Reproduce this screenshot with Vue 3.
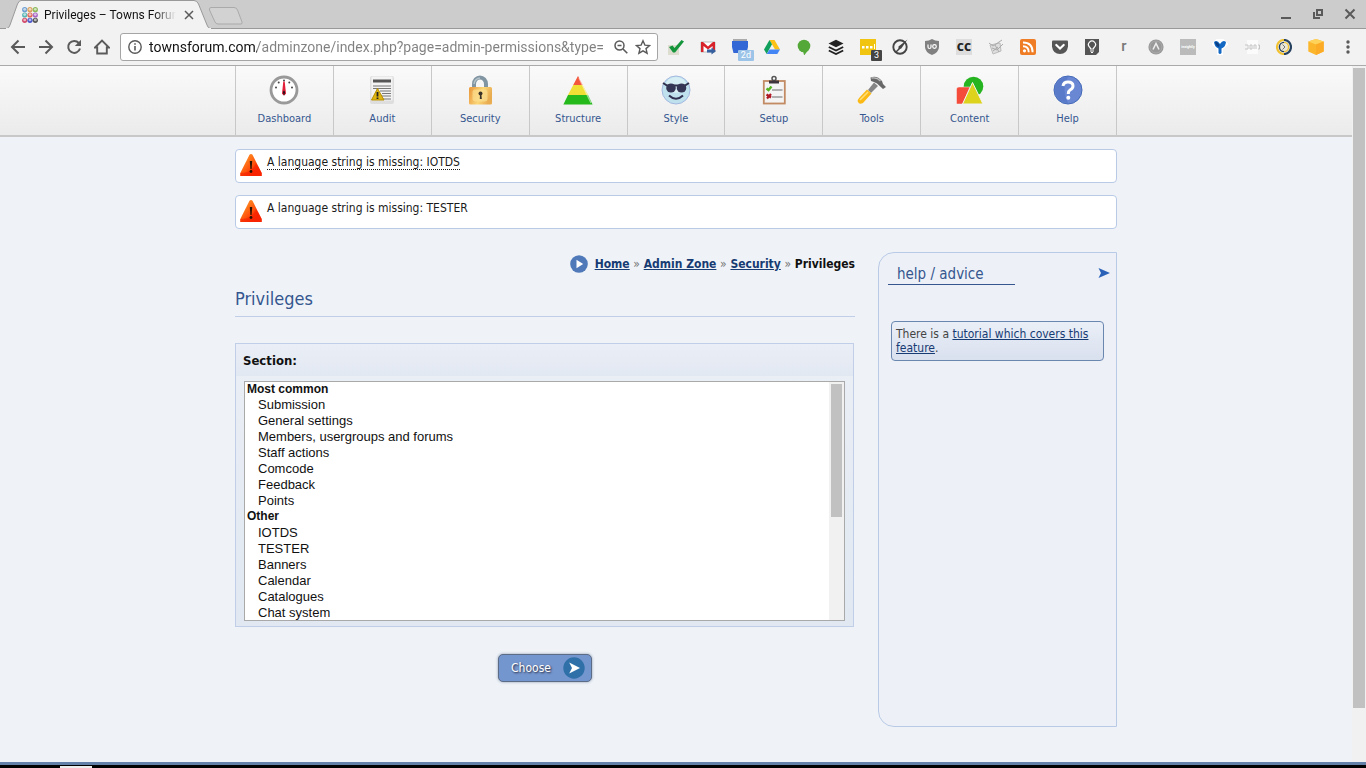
<template>
  <div class="window">
    <header class="tab-strip">
      <div class="tab">
        <svg class="tab-shape" viewBox="0 0 206 29" aria-hidden="true">
          <path d="M0 29 L1 28.500 Q3 28 4 25 L11.500 4 Q13 .5 15 .5 H188 Q191 .5 192.500 4 L201 25 Q202 28 204 28.500 L205 29Z" fill="#f2f2f2" stroke="#999" />
          <path d="M0 28.500H205" stroke="#f2f2f2" />
        </svg>
        <svg class="favicon" viewBox="0 0 16 16" aria-hidden="true">
          <g v-for="dot in faviconDots" :key="dot.x + '-' + dot.y">
            <circle :cx="dot.x" :cy="dot.y" r="2.600" :fill="dot.fill" />
            <circle :cx="dot.x" :cy="dot.y - 0.4" r="1.400" fill="#fff" opacity=".6" />
          </g>
        </svg>
        <span class="tab-title">Privileges – Towns Forum</span>
        <button class="tab-close" type="button" aria-label="Close tab">
          <svg viewBox="0 0 10 10" width="10" height="10"><path d="M1 1L9 9M9 1L1 9" stroke="#5a5a5a" stroke-width="1.500" /></svg>
        </button>
      </div>
      <button class="new-tab" type="button" aria-label="New tab">
        <svg viewBox="0 0 36 18" width="36" height="18"><path d="M3 .5H26Q28.500 .5 29.500 3L34 15Q34.500 17 33 17H10Q8 17 7 15L1.500 3Q1 .5 3 .5Z" fill="#d2d2d2" stroke="#aaa" /></svg>
      </button>
      <div class="window-controls">
        <button v-for="control in windowControls" :key="control.label" type="button" :aria-label="control.label">
          <svg viewBox="0 0 12 12" width="12" height="12" v-html="control.icon"></svg>
        </button>
      </div>
    </header>

    <div class="toolbar">
      <button v-for="button in browserButtons" :key="button.label" class="browser-button" type="button" :aria-label="button.label">
        <svg viewBox="0 0 16 16" width="16" height="16" v-html="button.icon"></svg>
      </button>
      <div class="address">
        <svg viewBox="0 0 14 14" width="14" height="14" aria-hidden="true">
          <circle cx="7" cy="7" r="6.200" fill="none" stroke="#5a5a5a" stroke-width="1.400" />
          <path d="M7 6V10.500M7 3.300V4.800" stroke="#5a5a5a" stroke-width="1.600" />
        </svg>
        <input v-model="address" type="text" aria-label="Address" spellcheck="false" />
        <svg viewBox="0 0 14 14" width="14" height="14" aria-hidden="true">
          <circle cx="5.500" cy="5.500" r="4.500" fill="none" stroke="#5a5a5a" stroke-width="1.500" />
          <path d="M9 9L13.300 13.300M3.500 5.500H7.500" stroke="#5a5a5a" stroke-width="1.600" />
        </svg>
        <svg viewBox="0 0 16 16" width="16" height="16" aria-hidden="true">
          <path d="M8 1.800L9.900 6.100L14.600 6.500L11 9.600L12.100 14.200L8 11.800L3.900 14.200L5 9.600L1.400 6.500L6.100 6.100Z" fill="none" stroke="#5a5a5a" stroke-width="1.400" />
        </svg>
      </div>
      <button v-for="extension in extensions" :key="extension.label" class="extension" type="button" :aria-label="extension.label">
        <svg viewBox="0 0 16 16" width="16" height="16" v-html="extension.icon"></svg>
        <span v-if="extension.badge" class="badge" :class="extension.badgeClass">{{ extension.badge }}</span>
      </button>
    </div>

    <div class="viewport">
      <div class="page">
        <nav class="admin-nav">
          <ul>
            <li v-for="item in navItems" :key="item.label">
              <a href="#">
                <svg viewBox="0 0 30 30" width="30" height="30" aria-hidden="true" v-html="item.icon"></svg>
                <span>{{ item.label }}</span>
              </a>
            </li>
          </ul>
        </nav>

        <div class="content">
          <div v-for="message in messages" :key="message.text" class="message">
            <svg viewBox="0 0 22 22" width="22" height="22" aria-hidden="true">
              <defs>
                <linearGradient id="warn" x1="0" y1="0" x2="1" y2="1">
                  <stop offset=".3" stop-color="#ff7a1a" />
                  <stop offset=".75" stop-color="#ff2a00" />
                </linearGradient>
              </defs>
              <path d="M9.500 .8Q11 -.6 12.500 .8L21.700 19V22H.3V19Z" fill="url(#warn)" />
              <path d="M.3 19Q12 19 16 9L21.700 19V22H.3Z" fill="#f41f00" opacity=".6" />
              <path d="M9.800 7H12.200L11.600 15H10.400Z" fill="#2b1200" />
              <circle cx="11" cy="17.500" r="1.400" fill="#2b1200" />
            </svg>
            <p><span :class="{ hinted: message.hinted }">{{ message.text }}</span></p>
          </div>

          <div class="columns">
            <main>
              <div class="breadcrumbs">
                <svg viewBox="0 0 18 18" width="18" height="18" aria-hidden="true">
                  <circle cx="9" cy="9" r="8.800" fill="#4f79b8" />
                  <path d="M6.500 4.800L13.200 9L6.500 13.200Z" fill="#fff" />
                </svg>
                <a href="#">Home</a><i>»</i><a href="#">Admin Zone</a><i>»</i><a href="#">Security</a><i>»</i><b>Privileges</b>
              </div>
              <h1>Privileges</h1>

              <form @submit.prevent>
                <div class="field">
                  <label for="section">Section:</label>
                  <div class="list-wrap">
                    <select id="section" v-model="section" size="15">
                      <optgroup v-for="group in sections" :key="group.label" :label="group.label">
                        <option v-for="option in group.options" :key="option">{{ option }}</option>
                      </optgroup>
                    </select>
                    <div class="list-track"><div class="list-thumb"></div></div>
                  </div>
                </div>
                <button class="choose" type="submit">
                  <span>Choose</span>
                  <svg viewBox="0 0 22 22" width="22" height="22" aria-hidden="true">
                    <circle cx="11" cy="11" r="10.700" fill="#2f70a8" />
                    <path d="M6.200 5.500L17 11L6.200 16.500L9 11Z" fill="#fff" />
                  </svg>
                </button>
              </form>
            </main>

            <aside>
              <div class="aside-head">
                <h2>help / advice</h2>
                <svg viewBox="0 0 12 12" width="12" height="12" aria-hidden="true">
                  <path d="M.5 1L12 6L.5 11L3 6Z" fill="#2b62b8" />
                </svg>
              </div>
              <p class="tutorial">There is a <a href="#">tutorial which covers this feature</a>.</p>
            </aside>
          </div>
        </div>
      </div>
      <div class="page-track"><div class="page-thumb"></div></div>
    </div>

    <footer class="taskbar"><div class="task"></div></footer>
  </div>
</template>

<script setup>
import { ref } from 'vue';

const address = ref('townsforum.com/adminzone/index.php?page=admin-permissions&type=');
const section = ref(null);

const dotColors = ['#6f9fd0', '#d9a05a', '#8ab85a', '#58b5b5', '#e06a5a', '#a765c4', '#d04a6a', '#4a55c8', '#555'];
const faviconDots = dotColors.map((fill, i) => ({
  fill,
  x: 2.7 + (i % 3) * 5.3,
  y: 2.7 + Math.floor(i / 3) * 5.3
}));

const windowControls = [
  { label: 'Minimize', icon: '<path d="M1 10H11" stroke="#5a5a5a" stroke-width="2"/>' },
  { label: 'Restore', icon: '<path d="M5 2H10V7H5Z M2 4V10H8" fill="none" stroke="#5a5a5a" stroke-width="2"/>' },
  { label: 'Close', icon: '<path d="M1.500 1.500L10.500 10.500M10.500 1.500L1.500 10.500" stroke="#5a5a5a" stroke-width="2"/>' }
];

const browserButtons = [
  { label: 'Back', icon: '<path d="M15 8H2.500M8.500 1.500L2 8L8.500 14.500" fill="none" stroke="#5a5a5a" stroke-width="2"/>' },
  { label: 'Forward', icon: '<path d="M1 8H13.500M7.500 1.500L14 8L7.500 14.500" fill="none" stroke="#5a5a5a" stroke-width="2"/>' },
  { label: 'Reload', icon: '<path d="M12.800 4A6 6 0 1 0 14 9.500" fill="none" stroke="#5a5a5a" stroke-width="2"/><path d="M15 .8V7H8.800Z" fill="#5a5a5a"/>' },
  { label: 'Home', icon: '<path d="M1 8.500L8 1.500L15 8.500H12.800V14.500H3.200V8.500Z" fill="none" stroke="#5a5a5a" stroke-width="1.900"/>' }
];

// Toolbar extensions, left to right, with the browser menu last
const extensions = [
  { label: 'Check', icon: '<path d="M0 6H11V16H0Z" fill="#dcdccf"/><path d="M1 8L4.500 6.500L6.500 9L13.500 1L16 2.500L7 13.500H5Z" fill="#14953c"/>' },
  { label: 'Mail', icon: '<path d="M1 3H15V13H1Z" fill="#fff" stroke="#bbb"/><path d="M1 13V3H3L8 7.500L13 3H15V13H12.500V7L8 10.500L3.500 7V13Z" fill="#d8222a"/><path d="M7 10.500H11.500V8.500L16 12L11.500 15.500V13.500H7Z" fill="#36609f"/>' },
  { label: 'Calendar', badge: '2d', badgeClass: 'light', icon: '<path d="M1 0H15V3H1Z" fill="#aaa"/><path d="M0 2H16V8L14.500 14H1.500L0 8Z" fill="#3367d6"/>' },
  { label: 'Drive', icon: '<path d="M5.500 1H10.500L16 10.500H11Z" fill="#fbc116"/><path d="M5.500 1L8 5.300L2.700 15L0 10.500Z" fill="#11a05c"/><path d="M5.500 10.500H16L13.300 15H2.700Z" fill="#4385f4"/>' },
  { label: 'Hangouts', icon: '<circle cx="8" cy="7" r="6.300" fill="#53a838"/><path d="M7 12H11.500L8.500 16H8Z" fill="#53a838"/>' },
  { label: 'Buffer', icon: '<path d="M8 .8L15.500 4.500L8 8.200L.5 4.500Z" fill="#222"/><path d="M.8 8L8 11.500L15.200 8M.8 11.500L8 15L15.200 11.500" fill="none" stroke="#222" stroke-width="1.900"/>' },
  { label: 'Messages', badge: '3', badgeClass: 'dark', icon: '<path d="M0 0H16V16H0Z" fill="#f1c40f"/><path d="M2 7H4.500V9.500H2ZM6 7H8.500V9.500H6ZM10 7H12.500V9.500H10ZM14 5H15V10H14Z" fill="#fff"/>' },
  { label: 'Compass', icon: '<circle cx="8" cy="8" r="6.700" fill="none" stroke="#444" stroke-width="1.900"/><path d="M15.500 .5L9.300 9.500L6.500 10.500L6.500 7.500Z" fill="#444"/><path d="M3.500 13.500L8 9" stroke="#444" stroke-width="1.400"/>' },
  { label: 'Shield', icon: '<path d="M8 0Q11 2 15 2V8Q15 13 8 16Q1 13 1 8V2Q5 2 8 0Z" fill="#808080"/><path d="M4 5.500V8Q4 9.500 5.500 9.500T7 8V5.500" fill="none" stroke="#fff" stroke-width="1.200"/><circle cx="10.500" cy="7.500" r="1.800" fill="none" stroke="#fff" stroke-width="1.200"/>' },
  { label: 'Captions', icon: '<path d="M0 0H16V16H0Z" fill="#ddd"/><text x="8" y="12" text-anchor="middle" font-family="Open Sans, sans-serif" font-size="11" font-weight="800" fill="#222">CC</text>' },
  { label: 'Notes', icon: '<path d="M2 6L12 4L13 12L5 15Z" fill="#dedede" stroke="#bbb"/><path d="M1 4L5 7L14 1M4 9L9 11L15 5M7 6L11 13M5 12L10 8" fill="none" stroke="#aaa"/>' },
  { label: 'RSS', icon: '<rect width="16" height="16" rx="2" fill="#ef7d25"/><circle cx="4.500" cy="11.800" r="1.600" fill="#fff"/><path d="M3 7.300Q8.700 7.300 8.700 13.200M3 3.500Q12.600 3.500 12.600 13.200" fill="none" stroke="#fff" stroke-width="1.900"/>' },
  { label: 'Pocket', icon: '<path d="M1 1.500H15Q16 1.500 16 2.500V7.500Q15 15 8 15T0 7.500V2.500Q0 1.500 1 1.500Z" fill="#555"/><path d="M4.300 6L8 9.500L11.700 6" fill="none" stroke="#fff" stroke-width="2.200" stroke-linecap="round"/>' },
  { label: 'Bulb', icon: '<path d="M1 0H15V13L12 16H1Z" fill="#555"/><path d="M6.500 10Q6.500 8.800 5.500 8A3.500 3.500 0 1 1 10.500 8Q9.500 8.800 9.500 10Z" fill="none" stroke="#fff" stroke-width="1.200"/><path d="M6 12H10M7 13.500H9" stroke="#fff"/>' },
  { label: 'Reader', icon: '<text x="8" y="12" text-anchor="middle" font-family="Roboto, sans-serif" font-size="15" font-weight="500" fill="#777">r</text>' },
  { label: 'Archive', icon: '<circle cx="8" cy="8" r="7.600" fill="#999"/><circle cx="8" cy="8" r="6" fill="none" stroke="#aaa"/><path d="M5 10.500L8 4.500L11 10.500" fill="none" stroke="#eee" stroke-width="1.500"/>' },
  { label: 'Insightly', icon: '<path d="M0 0H16V16H0Z" fill="#bbb"/><text x="8" y="9" text-anchor="middle" font-family="Roboto, sans-serif" font-size="3.500" font-weight="700" fill="#fff">insightly</text>' },
  { label: 'Balloon', icon: '<path d="M5 1H11L15 5L10 10V16H6V10L1 5Z" fill="#fff" stroke="#fff" stroke-width="2"/><path d="M2 3Q5 0 8 5Q11 0 14 3Q13.500 8 9.500 9.500V14Q8 16 6.500 14V9.500Q2.500 8 2 3Z" fill="#1268c3"/><path d="M3 3Q5 2 7.500 6L7 8Q3.500 7 3 3Z" fill="#0a3f85"/>' },
  { label: 'JSON', icon: '<path d="M3 1H14V15H3Z" fill="#fbfbfb"/><path d="M1 6H4V10H1M6 6V10H8V6ZM10 10V6H12V10M14 6H15.500V10H14" fill="none" stroke="#c4c4c4"/>' },
  { label: 'Coin', icon: '<path d="M8 1A7 7 0 0 0 8 15" fill="none" stroke="#f2c230" stroke-width="2.200"/><path d="M8 1A7 7 0 0 1 8 15" fill="none" stroke="#26415f" stroke-width="2.200"/><circle cx="8" cy="8" r="4.600" fill="#e9e6d8"/><path d="M8 3.400A4.600 4.600 0 0 0 8 12.600" fill="none" stroke="#26415f" stroke-width="1.400"/><path d="M8 3.400A4.600 4.600 0 0 1 8 12.600" fill="none" stroke="#f2c230" stroke-width="1.400"/><path d="M6.500 5.500L9 8L6.500 10.500" fill="none" stroke="#777"/>' },
  { label: 'Box', icon: '<path d="M8 0L15.700 2.500V12.500L8 16L.3 12.500V2.500Z" fill="#fbb62c"/><path d="M8 0L15.700 2.500L8 5.500L.3 2.500Z" fill="#ffd35a"/><path d="M8 5.500L15.700 2.500V12.500L8 16Z" fill="#fcab26"/>' },
  { label: 'Menu', icon: '<circle cx="8" cy="3" r="1.700" fill="#5a5a5a"/><circle cx="8" cy="8" r="1.700" fill="#5a5a5a"/><circle cx="8" cy="13" r="1.700" fill="#5a5a5a"/>' }
];

const navItems = [
  {
    label: 'Dashboard',
    icon: '<circle cx="15" cy="15" r="13" fill="#fff" stroke="#999" stroke-width="2.800"/><g fill="#444"><circle cx="15" cy="5.500" r="1"/><circle cx="9.700" cy="7.500" r="1"/><circle cx="20.300" cy="7.500" r="1"/><circle cx="7" cy="12.500" r="1"/><circle cx="23" cy="12.500" r="1"/></g><path d="M14.300 6.500H15.700L17 18.500Q15 22 13 18.500Z" fill="#e3203a"/><path d="M13.800 17L15 21L16.200 17L15 15.500Z" fill="#251018"/>'
  },
  {
    label: 'Audit',
    icon: '<rect x="3" y="1" width="24" height="28" rx="2" fill="#dedede"/><rect x="4.500" y="1.500" width="21" height="24" rx="1" fill="#f3f3f3"/><path d="M6 4.500H24V7.500H6Z" fill="#555"/><path d="M6 11H24M6 13.500H24M13 16H24M15 18.500H24M15 21H24M6 24H24" stroke="#777" stroke-width="1.200"/><path d="M10.500 13.500L17 25H4.500Z" fill="#dfb512" stroke="#b78d00"/><path d="M10.500 17V21.500M10.500 22.500V24" stroke="#222" stroke-width="1.800"/>'
  },
  {
    label: 'Security',
    icon: '<defs><linearGradient id="lock" x1="0" x2="1" y1="0" y2=".3"><stop stop-color="#e9953a"/><stop offset=".6" stop-color="#fbd778"/><stop offset="1" stop-color="#e9ac50"/></linearGradient></defs><path d="M9 12V9A6 6.500 0 0 1 21 9V12" fill="none" stroke="#8195a2" stroke-width="4"/><path d="M9 9A6 6.500 0 0 1 15 3" fill="none" stroke="#b4c2ca" stroke-width="1.500"/><rect x="4" y="12" width="23" height="17.500" rx="1.500" fill="url(#lock)"/><rect x="7.500" y="14.500" width="15" height="12" rx="3" fill="#fcdf91" opacity=".7"/><circle cx="15.500" cy="18.500" r="2" fill="#3c3328"/><path d="M15 19H16.300L16.800 24H14.800Z" fill="#3c3328"/>'
  },
  {
    label: 'Structure',
    icon: '<path d="M15 1L19.800 10H10.200Z" fill="#f4583c"/><path d="M10.200 10H19.800L25 20H5Z" fill="#f0df35"/><path d="M5 20H25L29.600 29.500H.4Z" fill="#25b91b"/><path d="M16 3L28 28" stroke="#fff" stroke-width="1.200" opacity=".55"/>'
  },
  {
    label: 'Style',
    icon: '<circle cx="15" cy="15" r="14" fill="#bfe1ee" stroke="#a4b8df"/><ellipse cx="15" cy="10" rx="10" ry="8" fill="#e0f4f7" opacity=".7"/><path d="M2 8L6 10.500H24L28 8" fill="none" stroke="#30304c" stroke-width="2"/><ellipse cx="10" cy="13" rx="4.800" ry="4.500" fill="#353555"/><ellipse cx="20.500" cy="13" rx="4.800" ry="4.500" fill="#353555"/><path d="M8 20.500Q15 27 22 20.500" fill="none" stroke="#303050" stroke-width="2"/>'
  },
  {
    label: 'Setup',
    icon: '<rect x="4.800" y="6" width="21" height="22.500" fill="#f4f4f4" stroke="#c28b63" stroke-width="1.800"/><circle cx="15" cy="3.500" r="2" fill="none" stroke="#555" stroke-width="1.500"/><path d="M10 5.500H20V8.500H10Z" fill="#3e343c"/><path d="M13 15H23.500M13 22H23.500" stroke="#999" stroke-width="1.700"/><path d="M7.500 13.500L9.500 15L12.500 11.500" fill="none" stroke="#54b522" stroke-width="2.400"/><path d="M7.500 19.500L12 22.500M8 23.500L12 19" stroke="#af1722" stroke-width="2.200"/>'
  },
  {
    label: 'Tools',
    icon: '<path d="M17 7.500L21 11L14 18L11 15Z" fill="#858585"/><path d="M13.500 2.500Q20 0 25 6L26 9L29 12L26 14L20 8.500Q17 6.500 14 6Z" fill="#686868"/><path d="M14.500 3Q20 2 23.500 6" fill="none" stroke="#bbb" stroke-width="1.300"/><path d="M10 14.500L14.500 18.500L6 28Q2 30 .8 26.500Q.5 24.500 2.500 22.500Z" fill="#fbb915"/><path d="M3 25L11 17" stroke="#ffe078" stroke-width="1.600"/>'
  },
  {
    label: 'Content',
    icon: '<circle cx="18.500" cy="11.500" r="9.800" fill="#26b521"/><path d="M1.500 14Q1.500 12 4 12H15L8 29H1.500Z" fill="#f44b3a" stroke="#f5f5f5" stroke-width=".5"/><path d="M17.500 7.500L28 29H7.500Z" fill="#ddd21c" stroke="#f3f3f3"/>'
  },
  {
    label: 'Help',
    icon: '<circle cx="15" cy="15" r="14" fill="#6987d3" stroke="#456ab8"/><path d="M15 2A13 13 0 0 0 2 15A13 13 0 0 0 15 28Q8 15 15 2Z" fill="#4f72c1" opacity=".6"/><path d="M10 11Q10.500 7 15 7Q20 7 20 11Q20 13.500 17 15Q15.300 16 15.300 19" fill="none" stroke="#fff" stroke-width="3"/><circle cx="15.300" cy="22.700" r="2" fill="#fff"/>'
  }
];

const messages = [
  { text: 'A language string is missing: IOTDS', hinted: true },
  { text: 'A language string is missing: TESTER', hinted: false }
];

const sections = [
  {
    label: 'Most common',
    options: ['Submission', 'General settings', 'Members, usergroups and forums', 'Staff actions', 'Comcode', 'Feedback', 'Points']
  },
  {
    label: 'Other',
    options: ['IOTDS', 'TESTER', 'Banners', 'Calendar', 'Catalogues', 'Chat system']
  }
];
</script>

<style>
body {
  margin: 0;
}
</style>

<style scoped>
* {
  box-sizing: border-box;
}

.window {
  display: flex;
  flex-direction: column;
  min-height: 100vh;
  background: #eff3f8;
  color: #1a1a1a;
  font-family: Tahoma, "DejaVu Sans Condensed", "Noto Sans", sans-serif;
  font-size: 12px;
}

svg {
  display: block;
  flex: none;
}

button {
  padding: 0;
  border: 0;
  background: none;
  font: inherit;
}

/* Browser chrome */
.tab-strip {
  display: flex;
  align-items: flex-start;
  height: 29px;
  padding-left: 6px;
  background: #ccc;
  border-bottom: 1px solid #999;
  font-family: Roboto, sans-serif;
}

.tab {
  position: relative;
  display: flex;
  align-items: center;
  width: 206px;
  height: 29px;
  padding: 0 16px;
}

.tab-shape {
  position: absolute;
  left: 0;
  top: 0;
  width: 206px;
  height: 29px;
}

.favicon {
  position: relative;
  width: 16px;
  height: 16px;
}

.tab-title {
  position: relative;
  width: 132px;
  margin-left: 6px;
  overflow: hidden;
  white-space: nowrap;
  color: #111;
  mask-image: linear-gradient(to right, #000 110px, transparent 132px);
}

.tab-close {
  position: relative;
  margin-left: 8px;
}

.new-tab {
  margin: 7px 0 0 -4px;
}

.window-controls {
  display: flex;
  gap: 20px;
  margin: 8px 10px 0 auto;
}

.toolbar {
  display: flex;
  align-items: center;
  height: 37px;
  padding: 0 2px 0 4px;
  background: #f2f2f2;
  border-bottom: 1px solid #aaa;
}

.browser-button {
  display: flex;
  justify-content: center;
  flex: none;
  width: 28px;
}

.address {
  display: flex;
  flex: 1;
  align-items: center;
  gap: 7px;
  min-width: 0;
  height: 28px;
  margin: 0 2px 0 4px;
  padding: 0 6px 0 7px;
  background: #fff;
  border: 1px solid #a5a5a5;
  border-radius: 3px;
}

/* The host name is dark and the path after it grey */
.address input {
  flex: 1;
  min-width: 0;
  height: 24px;
  padding: 0;
  border: 0;
  outline: 0;
  background: linear-gradient(to right, #111 108px, #808080 108px);
  background-clip: text;
  color: transparent;
  font: 14px Roboto, sans-serif;
}

.extension {
  position: relative;
  display: flex;
  justify-content: center;
  flex: none;
  width: 32px;
}

.badge {
  position: absolute;
  right: 2px;
  bottom: -6px;
  padding: 0 3px;
  border-radius: 1px;
  color: #fff;
  font: 9px/11px Roboto, sans-serif;
}

.badge.light {
  background: #9cc3e8;
}

.badge.dark {
  background: #444;
}

/* Page */
.viewport {
  display: flex;
  flex: 1;
}

.page {
  flex: 1;
}

.page-track {
  width: 14px;
  padding: 2px 1px;
  background: #f1f1f1;
}

.page-thumb {
  height: 92.500%;
  background: #c1c1c1;
}

.admin-nav {
  background: linear-gradient(#fafafa, #ebebeb);
  border-bottom: 2px solid #c8c8c8;
}

.admin-nav ul {
  display: flex;
  max-width: 882px;
  margin: 0 auto;
  padding: 0;
  list-style: none;
  border-right: 1px solid #c8c8c8;
}

.admin-nav li {
  flex: 1;
  border-left: 1px solid #c8c8c8;
}

.admin-nav a {
  display: flex;
  flex-direction: column;
  align-items: center;
  gap: 6px;
  height: 69px;
  padding-top: 9px;
  color: #35568f;
  font-size: 11px;
  line-height: 16px;
  text-decoration: none;
}

.content {
  max-width: 882px;
  margin: 0 auto;
  padding: 12px 0 35px;
}

.message {
  display: flex;
  gap: 5px;
  height: 34px;
  margin-bottom: 12px;
  padding: 4px;
  background: #fff;
  border: 1px solid #b9cae6;
  border-radius: 4px;
}

.message p {
  margin: 0;
  line-height: 16px;
}

.hinted {
  border-bottom: 1px dotted #1a1a1a;
}

.columns {
  display: flex;
  gap: 23px;
  margin-top: 23px;
}

main {
  flex: 1;
}

.breadcrumbs {
  display: flex;
  align-items: center;
  justify-content: flex-end;
  height: 24px;
  font-weight: bold;
}

.breadcrumbs svg {
  margin-right: 7px;
}

.breadcrumbs i {
  width: 14px;
  color: #777;
  font-style: normal;
  font-weight: normal;
  text-align: center;
}

.breadcrumbs b {
  color: #111;
}

a {
  color: #173b73;
}

h1 {
  margin: 11px 0 26px;
  padding-bottom: 5px;
  border-bottom: 1px solid #c0cee8;
  color: #35568f;
  font-size: 18px;
  font-weight: normal;
  line-height: 24px;
}

form {
  display: flex;
  flex-direction: column;
  align-items: center;
}

.field {
  align-self: stretch;
  margin-right: 1px;
  background: linear-gradient(#ebeff6, #e1e8f1);
  border: 1px solid #c0cee8;
}

.field label {
  display: block;
  padding: 2px 7px 0;
  background: linear-gradient(#eaeef6, #e2e8f2);
  color: #111;
  font-size: 13px;
  font-weight: bold;
  line-height: 30px;
}

.list-wrap {
  display: flex;
  height: 240px;
  margin: 5px 8px;
  background: #fff;
  border: 1px solid #a9a9a9;
}

select {
  flex: 1;
  min-width: 0;
  padding: 0;
  border: 0;
  outline: 0;
  overflow: hidden;
  background: #fff;
  color: #111;
  font: 13px "Liberation Sans", Arial, sans-serif;
}

optgroup {
  padding-left: 0;
  font-size: 12px;
}

option {
  padding: 0 2px 1px 13px;
  font-size: 13px;
}

.list-track {
  width: 15px;
  padding: 2px;
  background: #f1f1f1;
}

.list-thumb {
  height: 133px;
  background: #c1c1c1;
}

.choose {
  display: flex;
  align-items: center;
  gap: 12px;
  height: 28px;
  margin-top: 27px;
  padding: 0 6px 0 12px;
  background: #7496cf;
  border: 1px solid #5c6b86;
  border-radius: 5px;
  box-shadow: 0 0 3px #8b9ab3;
  color: #fff;
  text-shadow: 1px 1px 2px #223;
}

aside {
  width: 239px;
  min-height: 475px;
  padding: 11px 12px;
  background: #edf1f7;
  border: 1px solid #b9cae6;
  border-radius: 16px 0 0 16px;
}

.aside-head {
  display: flex;
  justify-content: space-between;
  margin: 0 -6px 36px -3px;
}

h2 {
  width: 127px;
  margin: 0;
  padding-left: 9px;
  border-bottom: 1px solid #35568f;
  color: #35568f;
  font-size: 15px;
  font-weight: normal;
  line-height: 20px;
}

.aside-head svg {
  margin-top: 3px;
}

.tutorial {
  margin: 0;
  padding: 5px 4px;
  background: linear-gradient(#eaeff7, #d9e0ee);
  border: 1px solid #6a87b0;
  border-radius: 4px;
  color: #444;
  line-height: 14px;
}

.taskbar {
  height: 6px;
  padding: 1px 60px 0;
  background: #000;
  border-top: 3px solid #6280a8;
}

.task {
  width: 32px;
  height: 2px;
  background: #eee;
}
</style>
